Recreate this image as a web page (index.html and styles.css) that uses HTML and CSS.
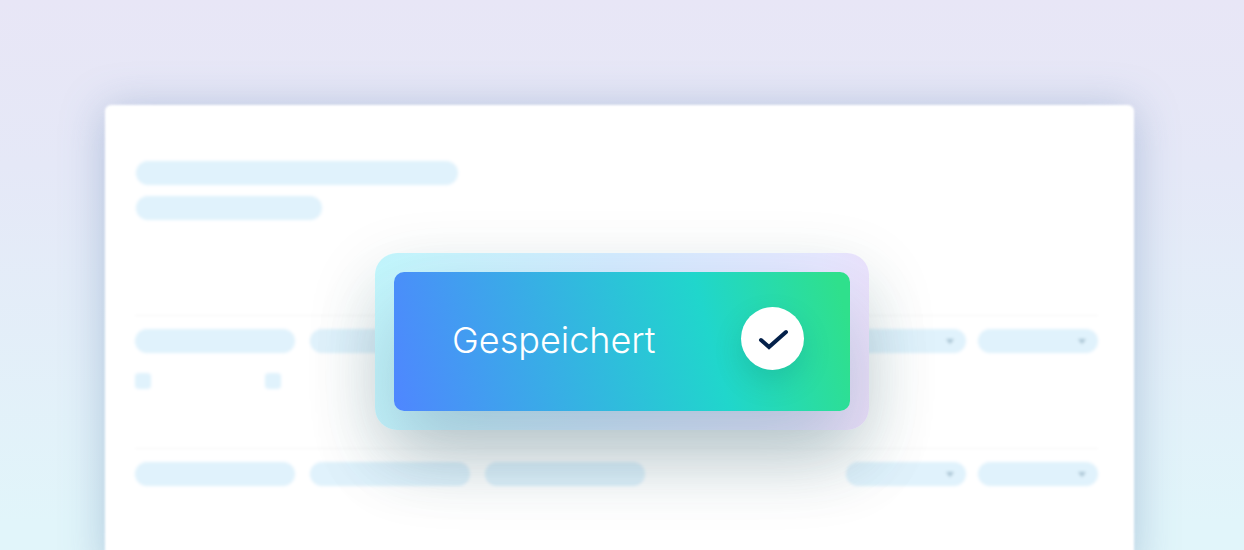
FILE: index.html
```
<!DOCTYPE html>
<html lang="de">
<head>
  <meta charset="UTF-8">
  <meta name="viewport" content="width=device-width, initial-scale=1">
  <title>Gespeichert</title>
  <link rel="stylesheet" href="styles.css">
</head>
<body>

<main class="scene">
  <!-- Placeholder form -->
  <div class="sheet" aria-hidden="true">
    <div class="heading">
      <div class="bar bar-title"></div>
      <div class="bar bar-subtitle"></div>
    </div>

    <div class="group">
      <div class="row">
        <div class="pill"></div>
        <div class="pill"></div>
        <div class="pill"></div>
        <div class="options">
          <div class="pill dropdown"></div>
          <div class="pill dropdown"></div>
        </div>
      </div>
      <div class="checks">
        <div class="check"></div>
        <div class="check"></div>
      </div>
    </div>

    <div class="group">
      <div class="row">
        <div class="pill"></div>
        <div class="pill"></div>
        <div class="pill"></div>
        <div class="options">
          <div class="pill dropdown"></div>
          <div class="pill dropdown"></div>
        </div>
      </div>
    </div>
  </div>

  <!-- Confirmation -->
  <div class="toast-frame">
    <div class="toast" role="status">
      <span class="message">Gespeichert</span>
      <span class="badge">
        <svg width="30" height="22" viewBox="0 0 30 22" aria-hidden="true">
          <path d="M3 12 L11 19 L28 4" fill="none" stroke="#04214a" stroke-width="4" stroke-linecap="round"/>
        </svg>
      </span>
    </div>
  </div>
</main>

</body>
</html>
```

FILE: styles.css
```
* {
  box-sizing: border-box;
}

body {
  margin: 0;
  font-family: Inter, "Open Sans", sans-serif;
}

.scene {
  position: relative;
  display: flex;
  min-height: 100vh;
  padding: 105px 110px 0 105px;
  overflow: hidden;
  background: linear-gradient(#e8e6f6 0%, #e5e8f7 30%, #e1f5fa 95%);
}

.sheet {
  flex: 1;
  margin-bottom: -20px;
  padding: 56px 36px 0 30px;
  border-radius: 6px;
  background: #fff;
  box-shadow: 0 4px 44px rgba(80, 120, 170, 0.36);
  filter: blur(1px);
}

.heading {
  display: flex;
  flex-direction: column;
  gap: 11px;
  padding-left: 1px;
}

.bar,
.pill {
  height: 24px;
  border-radius: 12px;
  background: #e0f2fc;
  filter: blur(1px);
}

.bar-title {
  width: 322px;
}

.bar-subtitle {
  width: 186px;
}

.group {
  margin-top: 59px;
  padding-top: 13px;
  border-top: 1px solid #f7f7f7;
}

.heading + .group {
  margin-top: 95px;
}

.row {
  display: flex;
  gap: 15px;
}

.pill {
  width: 160px;
}

.options {
  display: flex;
  gap: 12px;
  margin-left: auto;
}

.dropdown {
  display: flex;
  align-items: center;
  justify-content: flex-end;
  width: 120px;
  padding-right: 12px;
}

.dropdown::after {
  content: "";
  border: 4px solid transparent;
  border-top: 5px solid #a8c2d2;
  border-bottom: 0;
}

.checks {
  display: flex;
  gap: 114px;
  margin-top: 20px;
}

.check {
  width: 16px;
  height: 16px;
  border-radius: 4px;
  background: #e0f2fc;
  filter: blur(1px);
}

.toast-frame {
  position: absolute;
  top: 253px;
  left: 50%;
  width: 494px;
  max-width: 100%;
  padding: 19px;
  border-radius: 22px;
  background: linear-gradient(100deg, #c2f6fc 0%, #d3ebff 45%, #e6e7ff 85%, #ecdffa 100%);
  box-shadow: 0 24px 70px rgba(20, 80, 80, 0.16);
  transform: translateX(-50%);
}

.toast {
  display: flex;
  align-items: center;
  justify-content: space-between;
  padding: 35px 46px 41px 58px;
  border-radius: 10px;
  background: linear-gradient(75deg, #4f86ff 0%, #20d6cc 68%, #2fe08c 97%);
  box-shadow: 0 40px 76px rgba(50, 90, 110, 0.27);
}

.message {
  padding-top: 2px;
  color: #fff;
  font-size: 36px;
  font-weight: 300;
  line-height: 44px;
}

.badge {
  display: flex;
  align-items: center;
  justify-content: center;
  width: 63px;
  height: 63px;
  border-radius: 50%;
  background: #fff;
  box-shadow: 0 12px 28px rgba(0, 110, 110, 0.2);
}
```
